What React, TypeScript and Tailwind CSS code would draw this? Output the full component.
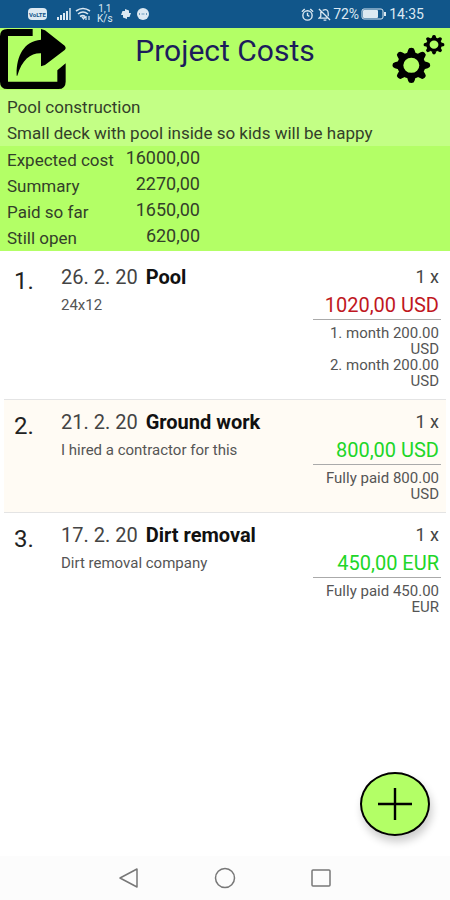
interface Cost {
  date: string
  name: string
  note: string
  amount: string
  open: boolean
  payments: string[]
}

const summary = [
  { label: 'Expected cost', value: '16000,00' },
  { label: 'Summary', value: '2270,00' },
  { label: 'Paid so far', value: '1650,00' },
  { label: 'Still open', value: '620,00' },
]

const costs: Cost[] = [
  { date: '26. 2. 20', name: 'Pool', note: '24x12', amount: '1020,00 USD', open: true, payments: ['1. month 200.00 USD', '2. month 200.00 USD'] },
  { date: '21. 2. 20', name: 'Ground work', note: 'I hired a contractor for this', amount: '800,00 USD', open: false, payments: ['Fully paid 800.00 USD'] },
  { date: '17. 2. 20', name: 'Dirt removal', note: 'Dirt removal company', amount: '450,00 EUR', open: false, payments: ['Fully paid 450.00 EUR'] },
]

const toothAngles = [0, 45, 90, 135, 180, 225, 270, 315]

function ShareIcon() {
  return (
    <svg viewBox="0 0 198 180" preserveAspectRatio="none" className="w-[66px] h-[60px]" aria-hidden="true">
      <path d="M98 0H22Q0 0 0 22V158Q0 180 22 180H175Q197 180 197 158V103L172 124V158H24V21H98Z" />
      <path d="M123 0L135 4L194 50Q200 57 194 63L135 108L123 112V73C92 72 66 92 52 140H50C48 88 68 36 123 32Z" />
    </svg>
  )
}

function Gear({ x, y, scale }: { x: number; y: number; scale: number }) {
  return (
    <g transform={`translate(${x} ${y}) scale(${scale * 1.07} ${scale})`}>
      <circle r="31" fill="none" stroke="currentColor" strokeWidth="17" />
      {toothAngles.map((angle) => (
        <path key={angle} d="M-12 -36L-9 -46Q-8 -53 0 -53Q8 -53 9 -46L12 -36Z" transform={`rotate(${angle})`} />
      ))}
    </g>
  )
}

function SettingsIcon() {
  return (
    <svg viewBox="0 0 162 150" className="w-[54px] h-[50px]" fill="currentColor" aria-hidden="true">
      <Gear x={58} y={97} scale={1} />
      <Gear x={126} y={35} scale={0.55} />
    </svg>
  )
}

function StatusBar() {
  return (
    <div className="flex h-7 shrink-0 items-center justify-between bg-[#11568a] pr-[26px] pl-7 text-[#dce9f2]">
      <div className="flex items-center">
        <span className="flex h-3 w-[19px] items-center justify-center rounded-sm bg-[#dce9f2] text-[6px] font-bold text-[#11568a]">VoLTE</span>
        <svg viewBox="0 0 14 12" className="ml-2.5 h-3 w-3.5" fill="currentColor" aria-hidden="true">
          <path d="M0 9h2v3H0zM3 7h2v5H3zM6 5h2v7H6zM9 3h2v9H9z" />
          <path d="M12 0h2v12h-2z" opacity=".7" />
        </svg>
        <svg viewBox="0 0 16 14" className="ml-1 h-3.5 w-4" fill="none" stroke="currentColor" strokeWidth="1.6" aria-hidden="true">
          <path d="M1 4Q8 -1 15 4M3 7Q8 3 13 7M5 9.500Q8 7.500 10 9.500" />
          <path d="M7 10l1.500 2L10 10zM11 9v4M14 13V9" strokeWidth="1.200" />
        </svg>
        <span className="ml-1.5 flex flex-col text-center text-[10px] leading-[10px]">
          <span>1,1</span>
          <span>K/s</span>
        </span>
        <svg viewBox="0 0 12 12" className="ml-[7px] size-3" fill="currentColor" aria-hidden="true">
          {[0, 90, 180, 270].map((angle) => (
            <path key={angle} d="M5 6V1L9 2.500V6Z" transform={`rotate(${angle} 6 6)`} />
          ))}
        </svg>
        <svg viewBox="0 0 12 12" className="ml-[5px] size-3" aria-hidden="true">
          <circle cx="6" cy="6" r="6" fill="currentColor" />
          <path d="M3 5l-1 1 1 1M9 5l1 1-1 1M4.500 6h3" fill="none" stroke="#6d9cbe" />
        </svg>
      </div>
      <div className="flex items-center text-sm">
        <svg viewBox="0 0 14 14" className="size-[13px]" fill="none" stroke="currentColor" strokeWidth="1.500" aria-hidden="true">
          <circle cx="7" cy="8" r="5" />
          <path d="M7 5v3l2 1M1 4l3-3M13 4l-3-3" />
        </svg>
        <svg viewBox="0 0 14 14" className="ml-1 size-[13px]" fill="none" stroke="currentColor" strokeWidth="1.400" aria-hidden="true">
          <path d="M1 1l12 12M3 4v5l-2 2h9M5 2.500Q11 0 11 6v3M6 13h3" />
        </svg>
        <span className="ml-0.5">72%</span>
        <svg viewBox="0 0 26 12" className="ml-0.5 h-3 w-[26px]" aria-hidden="true">
          <rect x="1" y="1" width="21" height="10" rx="2" fill="none" stroke="currentColor" />
          <rect x="2" y="2" width="15" height="8" rx="1" fill="currentColor" />
          <path d="M24 4v4" stroke="currentColor" strokeWidth="2" />
        </svg>
        <span className="ml-0.5">14:35</span>
      </div>
    </div>
  )
}

function CostRow({ cost, index }: { cost: Cost; index: number }) {
  return (
    <li className={`flex border-b py-2 pr-[5px] pl-1.5 ${index === 1 ? 'bg-[#fffbf4]' : ''} ${index === 2 ? 'border-transparent' : 'border-[#e4e4e4]'}`}>
      <span className="w-[51px] shrink-0 pt-1 pl-1 text-2xl leading-7 text-[#222222]">{index + 1}.</span>
      <div className="min-w-0 flex-1">
        <h2 className="text-xl leading-7 font-bold text-[#111111]">
          <span className="mr-2 font-normal text-[#444444]">{cost.date}</span>
          {cost.name}
        </h2>
        <p className="pt-0.5 text-[15px] leading-6 text-[#555555]">{cost.note}</p>
      </div>
      <div className="w-32 shrink-0 text-right">
        <p className="pr-0.5 text-lg leading-7 text-[#444444]">1 x</p>
        <p className={`border-b border-[#aaaaaa] pr-0.5 text-xl leading-7 ${cost.open ? 'text-[#c01722]' : 'text-[#20d628]'}`}>{cost.amount}</p>
        <div className="pt-[5px] pr-0.5 pb-0.5 text-[15px] leading-4 text-[#555555]">
          {cost.payments.map((payment) => (
            <p key={payment}>{payment}</p>
          ))}
        </div>
      </div>
    </li>
  )
}

export default function App() {
  return (
    <div className="relative flex min-h-screen flex-col bg-white font-['Roboto',sans-serif]">
      <StatusBar />

      {/* Title bar */}
      <header className="grid grid-cols-[1fr_auto_1fr] bg-[#b3ff66] py-px">
        <button type="button" aria-label="Share" className="w-fit">
          <ShareIcon />
        </button>
        <h1 className="pt-0.5 text-3xl leading-10 text-[#1c1c5c]">Project Costs</h1>
        <button type="button" aria-label="Settings" className="mt-1 mr-1 self-start justify-self-end">
          <SettingsIcon />
        </button>
      </header>

      {/* Project info */}
      <div className="bg-[#c3ff85] pt-1 pl-[7px] text-[17px] leading-[26px] text-[#33402a]">
        <p>Pool construction</p>
        <p>Small deck with pool inside so kids will be happy</p>
      </div>
      <div className="bg-[#b3ff66] pt-px pl-[7px] text-[17px] leading-[26px] text-[#33402a]">
        <table>
          <tbody>
            {summary.map((row) => (
              <tr key={row.label}>
                <th scope="row" className="w-[111px] p-0 text-left font-normal">{row.label}</th>
                <td className="w-[82px] p-0 text-right align-top text-lg leading-[22px]">{row.value}</td>
              </tr>
            ))}
          </tbody>
        </table>
      </div>

      <main className="flex-1 px-1 pt-1">
        <ol>
          {costs.map((cost, index) => (
            <CostRow key={cost.name} cost={cost} index={index} />
          ))}
        </ol>
      </main>

      <button
        type="button"
        aria-label="Add cost"
        className="absolute right-5 bottom-16 flex h-16 w-[70px] items-center justify-center rounded-[50%] border-2 border-black bg-[#b3ff66] shadow-[2px_6px_8px_rgba(0,0,0,0.2)]"
      >
        <svg viewBox="0 0 34 32" className="h-8 w-[34px]" stroke="black" strokeWidth="2.400" aria-hidden="true">
          <path d="M17 0V32M0 16H34" />
        </svg>
      </button>

      {/* System navigation */}
      <nav className="flex h-11 shrink-0 items-center justify-center gap-[74px] bg-[#fcfcfc] text-[#777777]">
        <button type="button" aria-label="Back">
          <svg viewBox="0 0 22 22" className="size-[22px]" fill="none" stroke="currentColor" strokeWidth="1.500" aria-hidden="true">
            <path d="M2 11L19 2V20Z" strokeLinejoin="round" />
          </svg>
        </button>
        <button type="button" aria-label="Home">
          <svg viewBox="0 0 22 22" className="size-[22px]" fill="none" stroke="currentColor" strokeWidth="1.500" aria-hidden="true">
            <circle cx="11" cy="11" r="9.500" />
          </svg>
        </button>
        <button type="button" aria-label="Recent apps">
          <svg viewBox="0 0 22 22" className="size-[22px]" fill="none" stroke="currentColor" strokeWidth="1.500" aria-hidden="true">
            <rect x="2" y="3" width="18" height="16" rx="1" />
          </svg>
        </button>
      </nav>
    </div>
  )
}
